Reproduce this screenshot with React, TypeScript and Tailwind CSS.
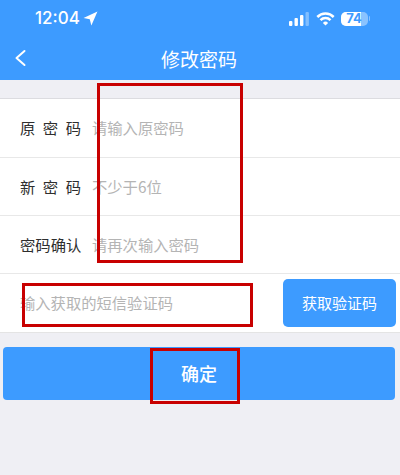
const cjk = { fontFamily: '"Noto Sans CJK SC", "Liberation Sans", sans-serif' };

function Row({ label, placeholder, tall }: { label: string; placeholder: string; tall?: boolean }) {
  return (
    <div className={`flex items-center border-b border-[#e8e8e8] pl-5 ${tall ? 'h-[59px]' : 'h-[58px]'}`}>
      <div className="mr-[11px] flex w-[61px] justify-between text-[15.3px] leading-none text-[#2e2e2e]">
        {label.split('').map((c, i) => <span key={i}>{c}</span>)}
      </div>
      <span className="text-[15.3px] leading-none text-[#b4b4b4]">{placeholder}</span>
    </div>
  );
}

export default function App() {
  return (
    <div className="relative h-[475px] w-[400px] overflow-hidden bg-[#efeff4]" style={cjk}>
      <div className="h-[80px] bg-[#3d9bff] text-white">
        <div className="flex h-[36px] items-center justify-between pl-[35px] pr-[30px] pt-[1px]">
          <div className="flex items-center gap-[3px]">
            <span className="text-[17px] font-medium leading-none" style={{ fontFamily: '"Inter", "Liberation Sans", sans-serif' }}>12:04</span>
            <svg width="15" height="15" viewBox="0 0 14 14"><path d="M13.5 0.5 L7.8 13.5 L6.3 7.6 L0.5 6.6 Z" fill="white" /></svg>
          </div>
          <div className="flex items-center gap-[6px]">
            <svg width="21" height="14" viewBox="0 0 21 14">
              <rect x="0" y="9" width="3.4" height="5" rx="1" fill="white" />
              <rect x="5.5" y="6" width="3.4" height="8" rx="1" fill="white" />
              <rect x="11" y="3" width="3.4" height="11" rx="1" fill="white" />
              <rect x="16.5" y="0" width="3.4" height="14" rx="1" fill="white" fillOpacity="0.35" />
            </svg>
            <svg width="19" height="14" viewBox="0 0 19 14" fill="none" stroke="white" strokeWidth="2.5" strokeLinecap="butt">
              <path d="M1.3 5 A11.5 11.5 0 0 1 17.7 5" />
              <path d="M4.5 8.1 A7 7 0 0 1 14.5 8.1" />
              <path d="M9.5 13.6 L6.9 10.9 A3.7 3.7 0 0 1 12.1 10.9 Z" fill="white" stroke="none" />
            </svg>
            <div className="flex items-center gap-[1px]">
              <div className="relative h-[14px] w-[27px] overflow-hidden rounded-[5px] bg-white/40">
                <div className="h-full w-[20px] bg-white" />
                <span className="absolute inset-0 flex items-center justify-center text-[13px] font-bold leading-none text-[#3d9bff]" style={{ fontFamily: '"Inter", "Liberation Sans", sans-serif' }}>74</span>
              </div>
              <div className="h-[5px] w-[1.5px] rounded-r-sm bg-white/40" />
            </div>
          </div>
        </div>
        <div className="relative flex h-[44px] items-center justify-center pr-[2px]">
          <svg className="absolute left-[14px] top-[13px]" width="13" height="18" viewBox="0 0 13 18" fill="none" stroke="white" strokeWidth="2" strokeLinecap="round" strokeLinejoin="round">
            <path d="M10.5 2 L2.5 9 L10.5 16" />
          </svg>
          <span className="text-[19px] font-normal leading-none">修改密码</span>
        </div>
      </div>

      <div className="mt-[18px] border-t border-[#dcdce0] bg-white">
        <Row label="原密码" placeholder="请输入原密码" tall />
        <Row label="新密码" placeholder="不少于6位" />
        <Row label="密码确认" placeholder="请再次输入密码" />
        <div className="flex h-[59px] items-center justify-between border-b border-[#e4e4e4] pl-5 pr-[4px]">
          <span className="text-[15.3px] leading-none text-[#b4b4b4]">输入获取的短信验证码</span>
          <button className="flex h-[48px] w-[113px] items-center justify-center rounded-[5px] bg-[#3d9bff] text-[15px] text-white">获取验证码</button>
        </div>
      </div>

      <div className="mt-[14px] pl-[3px] pr-[5px]">
        <button className="flex h-[53px] w-full items-center justify-center rounded-[4px] bg-[#3d9bff] text-[18px] font-medium text-white">确定</button>
      </div>

      <div className="absolute left-[97px] top-[83px] h-[180px] w-[146px] border-[3px] border-[#c80000]" />
      <div className="absolute left-[22px] top-[283px] h-[44px] w-[231px] border-[3px] border-[#c80000]" />
      <div className="absolute left-[150px] top-[348px] h-[56px] w-[90px] border-[3px] border-[#c80000]" />
    </div>
  );
}
